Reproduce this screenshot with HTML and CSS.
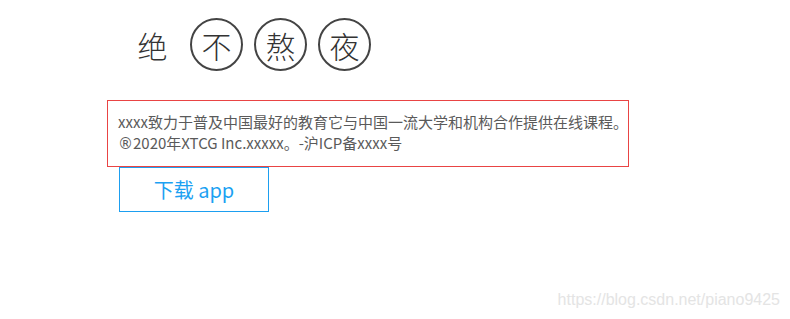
FILE: index.html
```html
<!DOCTYPE html>
<html lang="zh-CN">
<head>
<meta charset="utf-8">
<title>绝不熬夜</title>
<link rel="stylesheet" href="styles.css">
</head>
<body>
<div class="page">
  <div class="title">
    <span class="char">绝</span>
    <span class="char circle">不</span>
    <span class="char circle">熬</span>
    <span class="char circle">夜</span>
  </div>
  <div class="info">
    <p class="line">xxxx致力于普及中国最好的教育它与中国一流大学和机构合作提供在线课程。</p>
    <p class="line"><span class="reg">®</span>2020年XTCG Inc.xxxxx。-沪ICP备xxxx号</p>
  </div>
  <a class="download" href="#">下载 app</a>
</div>
<div class="watermark">https://blog.csdn.net/piano9425</div>
</body>
</html>
```

FILE: styles.css
```css
html, body {
  margin: 0;
  padding: 0;
  background: #ffffff;
}

body {
  width: 790px;
  height: 319px;
  position: relative;
  overflow: hidden;
  font-family: "Noto Sans CJK SC", "Noto Sans", sans-serif;
}

.page {
  padding: 18px 0 0 107px;
  display: flex;
  flex-direction: column;
  align-items: flex-start;
}

.title {
  display: flex;
  gap: 11px;
  margin-left: 19px;
}

.char {
  box-sizing: border-box;
  width: 53px;
  height: 53px;
  display: flex;
  align-items: center;
  justify-content: center;
  font-size: 30px;
  font-weight: 300;
  line-height: 1;
  color: #333333;
}

.circle {
  border: 2px solid #444444;
  border-radius: 50%;
}

.info {
  margin-top: 29px;
  width: 500px;
  padding: 10px 10px 13px;
  border: 1px solid #e94444;
  color: #5a5a5a;
  font-size: 15px;
  line-height: 21px;
}

.line {
  margin: 0;
  height: 21px;
  overflow: visible;
  white-space: nowrap;
}

.reg {
  font-family: "DejaVu Sans", sans-serif;
  font-size: 15px;
  line-height: 1;
}

.download {
  box-sizing: border-box;
  margin-left: 12px;
  width: 150px;
  height: 45px;
  border: 1px solid #1d9ff0;
  display: flex;
  align-items: center;
  justify-content: center;
  color: #1ba1f2;
  font-size: 20px;
  text-decoration: none;
}

.watermark {
  position: absolute;
  right: 10px;
  bottom: 10px;
  font-family: "Liberation Sans", Arial, sans-serif;
  font-size: 16px;
  color: #e4e4e4;
}
```
